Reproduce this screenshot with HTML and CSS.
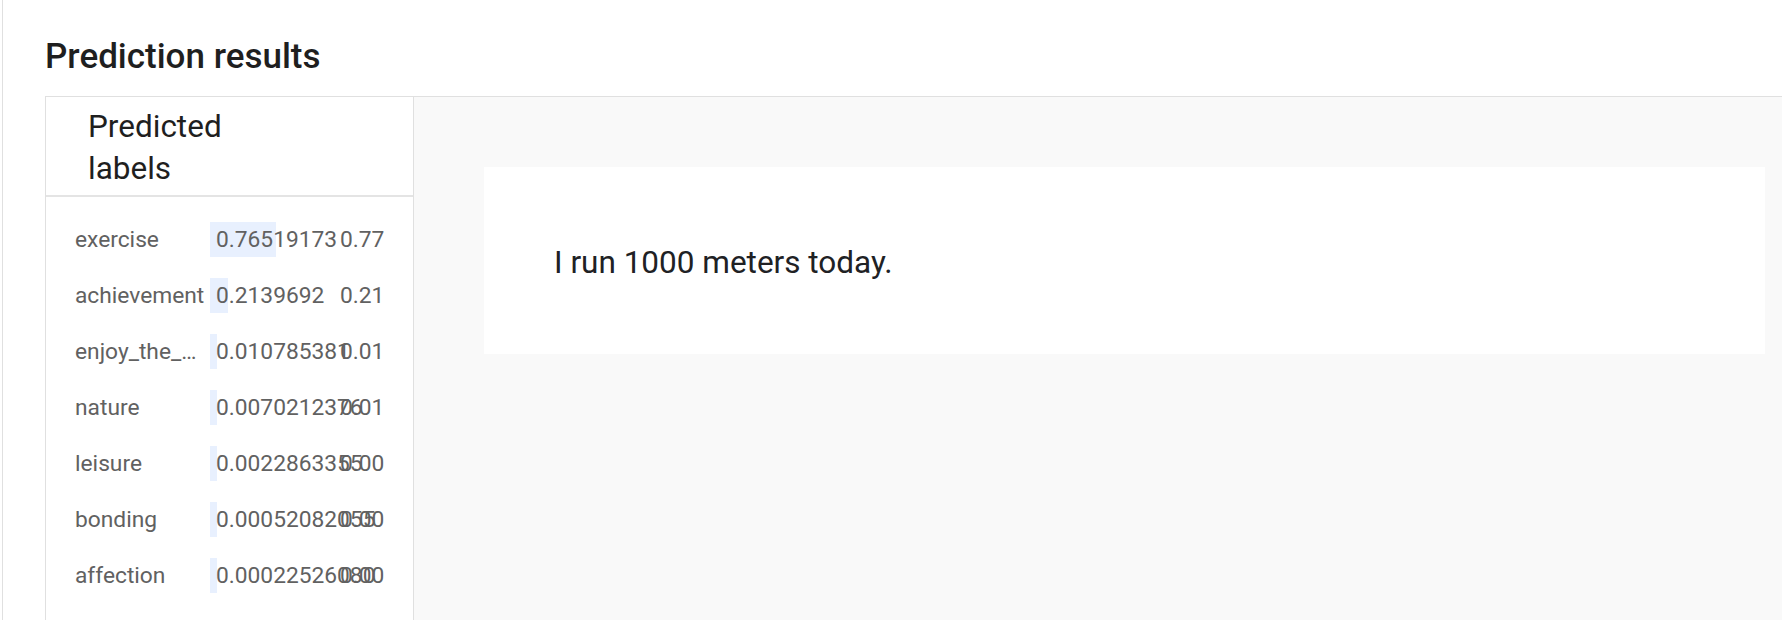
FILE: index.html
```html
<!DOCTYPE html>
<html>
<head>
<meta charset="utf-8">
<link rel="stylesheet" href="styles.css">
</head>
<body>
<div class="frame">
  <h1 class="title">Prediction results</h1>
  <div class="card">
    <div class="labels-panel">
      <div class="labels-header"><span class="labels-header-text">Predicted labels</span></div>
      <div class="rows">
        <div class="row"><span class="label">exercise</span><span class="score"><span class="bar" style="width:66px"></span><span class="score-text">0.76519173</span></span><span class="rounded">0.77</span></div>
        <div class="row"><span class="label">achievement</span><span class="score"><span class="bar" style="width:18px"></span><span class="score-text">0.2139692</span></span><span class="rounded">0.21</span></div>
        <div class="row"><span class="label">enjoy_the_moment</span><span class="score"><span class="bar" style="width:7px"></span><span class="score-text">0.010785381</span></span><span class="rounded">0.01</span></div>
        <div class="row"><span class="label">nature</span><span class="score"><span class="bar" style="width:7px"></span><span class="score-text">0.0070212376</span></span><span class="rounded">0.01</span></div>
        <div class="row"><span class="label">leisure</span><span class="score"><span class="bar" style="width:7px"></span><span class="score-text">0.0022863355</span></span><span class="rounded">0.00</span></div>
        <div class="row"><span class="label">bonding</span><span class="score"><span class="bar" style="width:7px"></span><span class="score-text">0.00052082055</span></span><span class="rounded">0.00</span></div>
        <div class="row"><span class="label">affection</span><span class="score"><span class="bar" style="width:7px"></span><span class="score-text">0.00022526080</span></span><span class="rounded">0.00</span></div>
      </div>
    </div>
    <div class="preview-panel">
      <div class="preview-box">I run 1000 meters today.</div>
    </div>
  </div>
</div>
</body>
</html>
```

FILE: styles.css
```css
html, body {
  margin: 0;
  padding: 0;
  background: #ffffff;
}

body {
  font-family: Roboto, "Noto Sans", "Liberation Sans", sans-serif;
  overflow: hidden;
}

.frame {
  margin-left: 2px;
  border-left: 1px solid #e0e0e0;
  height: 620px;
  padding-left: 42px;
  display: flex;
  flex-direction: column;
  box-sizing: border-box;
}

.title {
  margin: 37px 0 19px 0;
  font-size: 35px;
  line-height: 40px;
  font-weight: 500;
  color: #1f1f1f;
}

.card {
  flex: 1;
  display: flex;
  border-top: 1px solid #e0e0e0;
  min-height: 0;
}

.labels-panel {
  width: 369px;
  flex: none;
  box-sizing: border-box;
  border-left: 1px solid #e0e0e0;
  border-right: 1px solid #e0e0e0;
  background: #ffffff;
}

.labels-header {
  padding: 9px 0 5px 42px;
  border-bottom: 2px solid #e4e4e4;
  font-size: 31.5px;
  line-height: 42px;
  color: #1f1f1f;
}

.labels-header-text {
  display: block;
  max-width: 170px;
}

.rows {
  padding: 14px 0 0 29px;
}

.row {
  display: flex;
  align-items: center;
  height: 56px;
  font-size: 22.75px;
  color: #616161;
  white-space: nowrap;
}

.label {
  width: 130px;
  margin-right: 5px;
  overflow: hidden;
  text-overflow: ellipsis;
  flex: none;
}

.score {
  position: relative;
  width: 130px;
  flex: none;
  height: 35px;
  display: flex;
  align-items: center;
}

.bar {
  position: absolute;
  left: 0;
  top: 0;
  height: 35px;
  background: #e8f0fe;
}

.score-text {
  position: relative;
  padding-left: 6px;
}

.rounded {
  position: relative;
}

.preview-panel {
  flex: 1;
  background: #f9f9f9;
  padding: 70px 17px 0 70px;
}

.preview-box {
  background: #ffffff;
  padding: 72px 70px 68px 70px;
  font-size: 31.5px;
  line-height: 47px;
  color: #202124;
}
```
